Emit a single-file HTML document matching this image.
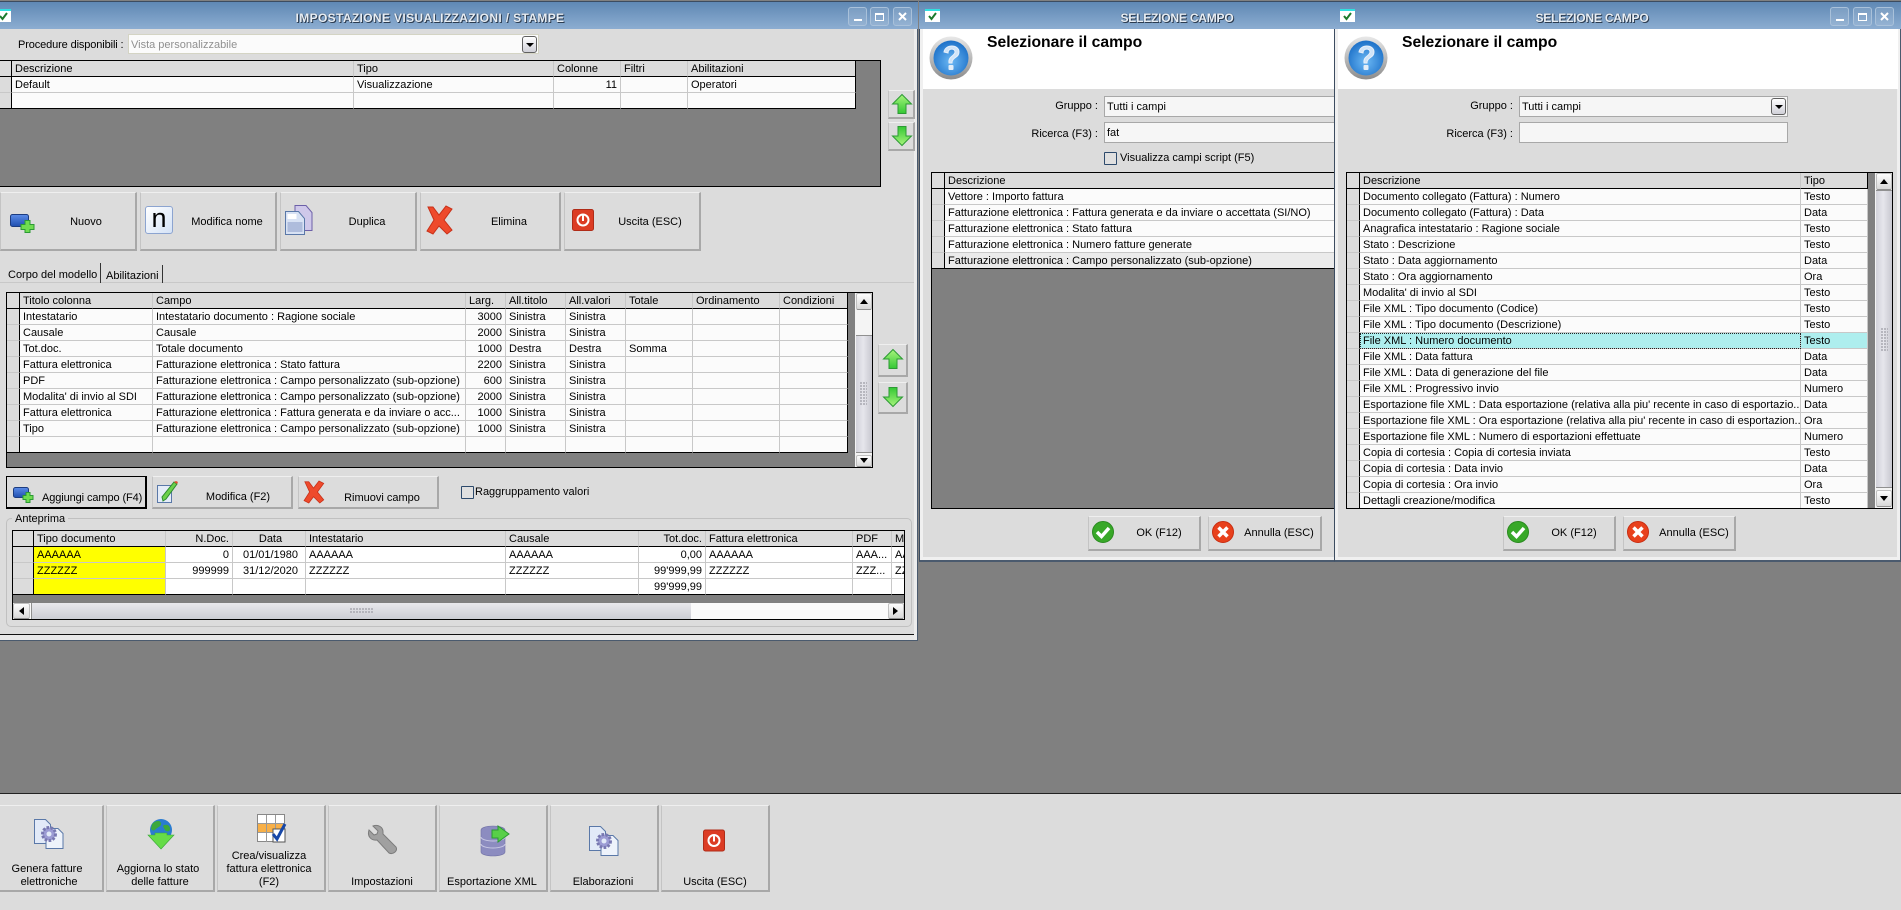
<!DOCTYPE html>
<html><head><meta charset="utf-8"><title>Impostazione</title>
<style>
html,body{margin:0;padding:0;width:1901px;height:910px;overflow:hidden;background:#808080;font-family:"Liberation Sans",sans-serif;font-size:11px;color:#000}
.a{position:absolute;box-sizing:border-box}
.t{position:absolute;white-space:nowrap;font-size:11px;line-height:14px;height:14px}
.c{text-align:center}
.tb{position:absolute;background:linear-gradient(#5f88b4,#8cadd1);border-top:1px solid #3c4c60;box-sizing:border-box}
.tt{position:absolute;font-weight:bold;font-size:12px;color:#e8eef4;text-shadow:1px 1px 0 #2c3c50,0 0 1px #2c3c50;text-align:center;white-space:nowrap;line-height:14px}
.wb{position:absolute;box-sizing:border-box;width:19px;height:19px;top:7px;border:1px solid #a9c1da;border-radius:3px;background:rgba(255,255,255,.12)}
.btn{position:absolute;box-sizing:border-box;background:#dcdcdc;border-style:solid;border-width:1px 2px 2px 1px;border-color:#efefef #a8a8a8 #a8a8a8 #c4c4c4}
.g{position:absolute;box-sizing:border-box;background:#808080;border:1px solid #000;overflow:hidden}
.g table{border-collapse:separate;border-spacing:0;table-layout:fixed;font-size:11px}
.g td{height:16px;box-sizing:border-box;border-right:1px solid #c8c8c8;border-bottom:1px solid #c8c8c8;background:#fbfbfb;padding:2px 0 0 3px;white-space:nowrap;overflow:hidden;line-height:13px}
.g tr.h td{background:#dcdcdc;border-bottom:1px solid #000}
.g td.i{background:#dcdcdc;border-right:1px solid #000;padding:0}
.g td.r{text-align:right;padding:2px 3px 0 0}
.inp{position:absolute;box-sizing:border-box;background:#f6f6f6;border:1px solid #a8a8a8}
.cb{position:absolute;box-sizing:border-box;width:15px;height:17px;background:linear-gradient(#fff,#d0d0d8);border:1px solid #606060;border-radius:3px}
.cb:after{content:"";position:absolute;left:3px;top:6px;border-left:4px solid transparent;border-right:4px solid transparent;border-top:4px solid #000}
.chk{position:absolute;box-sizing:border-box;width:13px;height:13px;background:#e0e0e0;border:1px solid #2d4a6c;border-radius:1px}
.sbb{position:absolute;box-sizing:border-box;background:linear-gradient(#fdfdfd,#d8d8d8);border:1px solid #c0c0c0;border-bottom:1px solid #909090;border-radius:2px}
.sb{position:absolute;box-sizing:border-box;background:linear-gradient(90deg,#d2d2da,#e6e6ec 45%,#c8c8d0);border-top:1px solid #909090;border-bottom:1px solid #909090}
.sbh{position:absolute;box-sizing:border-box;background:linear-gradient(#e8e8ec,#cccdd4)}
.grip{position:absolute;background-image:radial-gradient(circle at 1px 1px,#a8a8b0 1px,transparent 1px);background-size:3px 3px}
svg{position:absolute;overflow:visible}
</style></head><body>

<!-- MAIN WINDOW -->
<div class="a" style="left:0;top:29px;width:918px;height:612px;background:#dcdcdc;border-right:1px solid #4a5a6e;border-bottom:1px solid #4a5a6e"></div>
<div class="a" style="left:0;top:635px;width:917px;height:5px;background:#e8e8e8"></div>
<div class="a" style="left:0;top:634px;width:914px;height:1px;background:#111"></div>
<div class="a" style="left:914px;top:29px;width:3px;height:611px;background:#ececec"></div>
<div class="tb" style="left:0;top:1px;width:918px;height:28px"></div>
<svg style="left:-4px;top:9px" width="15" height="13" viewBox="0 0 15 13"><rect width="15" height="13" fill="#fff"/><rect width="15" height="2" fill="#30e0e0"/><path d="M4 7l2.500 3L11 4" fill="none" stroke="#1c7a2c" stroke-width="2"/></svg>
<div class="tt" style="left:280px;width:300px;top:11px;letter-spacing:.36px">IMPOSTAZIONE VISUALIZZAZIONI / STAMPE</div>
<div class="wb" style="left:848px"><div class="a" style="left:5px;top:11px;width:8px;height:2px;background:#fff"></div></div>
<div class="wb" style="left:870px"><div class="a" style="left:4px;top:5px;width:9px;height:8px;border:1px solid #fff;border-top-width:2px"></div></div>
<div class="wb" style="left:893px"><svg style="left:4px;top:4px" width="9" height="9"><path d="M1 1l7 7M8 1l-7 7" stroke="#fff" stroke-width="2"/></svg></div>

<div class="t" style="left:18px;top:38px;letter-spacing:-.12px">Procedure disponibili :</div>
<div class="inp" style="left:128px;top:34px;width:411px;height:20px;background:#fbfbfb;border-color:#d4d4c4"></div>
<div class="t" style="left:131px;top:38px;color:#909090">Vista personalizzabile</div>
<div class="cb" style="left:522px;top:36px"></div>

<div class="g" style="left:-1px;top:60px;width:882px;height:127px">
<table style="width:856px"><colgroup><col style="width:12px"><col style="width:342px"><col style="width:200px"><col style="width:67px"><col style="width:67px"><col style="width:168px"></colgroup>
<tr class="h"><td class="i"></td><td>Descrizione</td><td>Tipo</td><td>Colonne</td><td>Filtri</td><td style="border-right:1px solid #000">Abilitazioni</td></tr>
<tr><td class="i"></td><td>Default</td><td>Visualizzazione</td><td class="r">11</td><td></td><td style="border-right:1px solid #000">Operatori</td></tr>
<tr><td class="i" style="border-bottom:1px solid #000"></td><td style="border-bottom:1px solid #000"></td><td style="border-bottom:1px solid #000"></td><td style="border-bottom:1px solid #000"></td><td style="border-bottom:1px solid #000"></td><td style="border-right:1px solid #000;border-bottom:1px solid #000"></td></tr>
</table></div>

<svg width="0" height="0" style="left:0;top:0"><defs>
<linearGradient id="gu" x1="0" y1="0" x2="0" y2="1"><stop offset="0" stop-color="#a8f47c"/><stop offset="1" stop-color="#34c834"/></linearGradient>
<linearGradient id="gd" x1="0" y1="1" x2="0" y2="0"><stop offset="0" stop-color="#a8f47c"/><stop offset="1" stop-color="#34c834"/></linearGradient>
<linearGradient id="bl" x1="0" y1="0" x2="0" y2="1"><stop offset="0" stop-color="#5c8ce8"/><stop offset="1" stop-color="#1f4fb0"/></linearGradient>
<linearGradient id="q1" x1="0" y1="0" x2="0" y2="1"><stop offset="0" stop-color="#e8e8e8"/><stop offset="1" stop-color="#8c8c8c"/></linearGradient>
<radialGradient id="q2" cx=".5" cy=".6" r=".6"><stop offset="0" stop-color="#6cb8f4"/><stop offset="1" stop-color="#1c70c8"/></radialGradient>
</defs></svg>

<div class="btn" style="left:888px;top:90px;width:27px;height:29px"></div>
<svg style="left:892px;top:94px" width="20" height="20" viewBox="0 0 20 20"><path d="M10 .5L19.500 10H14v9.500H6V10H.5z" fill="url(#gu)" stroke="#2c9a34"/></svg>
<div class="btn" style="left:888px;top:122px;width:27px;height:29px"></div>
<svg style="left:892px;top:126px" width="20" height="20" viewBox="0 0 20 20"><path d="M10 19.500L19.500 10H14V.5H6V10H.5z" fill="url(#gd)" stroke="#2c9a34"/></svg>

<div class="btn" style="left:0;top:192px;width:137px;height:59px"></div>
<div class="btn" style="left:140px;top:192px;width:137px;height:59px"></div>
<div class="btn" style="left:280px;top:192px;width:137px;height:59px"></div>
<div class="btn" style="left:420px;top:192px;width:141px;height:59px"></div>
<div class="btn" style="left:564px;top:192px;width:137px;height:59px"></div>
<div class="t c" style="left:36px;width:100px;top:215px">Nuovo</div>
<div class="t c" style="left:177px;width:100px;top:215px">Modifica nome</div>
<div class="t c" style="left:317px;width:100px;top:215px">Duplica</div>
<div class="t c" style="left:459px;width:100px;top:215px">Elimina</div>
<div class="t c" style="left:600px;width:100px;top:215px">Uscita (ESC)</div>

<svg style="left:10px;top:214px" width="25" height="19" viewBox="0 0 25 19"><rect x=".5" y=".5" width="18" height="12" rx="2" fill="url(#bl)" stroke="#1c3c80"/><path d="M13.500 4.500h4v4h6v4h-4v... " fill="none"/><path d="M15 6.500h5v4h4v5h-4v3h-5v-3h-4v-5h4z" fill="#6fdc50" stroke="#2b9a34"/></svg>
<div class="a" style="left:145px;top:206px;width:28px;height:28px;background:linear-gradient(135deg,#fff,#d4e2f6);border:1px solid #8ca4d0;border-radius:3px;text-align:center;font-size:27px;line-height:22px">n</div>
<svg style="left:285px;top:205px" width="28" height="30" viewBox="0 0 28 30"><path d="M10 .5h11l6 7v18H10z" fill="#cfc8ea" stroke="#6c60a8"/><path d="M.5 6.500h13l6 7v16H.5z" fill="#d8e2f4" stroke="#5a78a8"/><rect x="2.500" y="17" width="15" height="10" fill="#aebcdc"/><rect x="2.500" y="9" width="9" height="5" fill="#fff"/></svg>
<svg style="left:425px;top:206px" width="28" height="28" viewBox="0 0 28 28"><path d="M3 1l5 0 6 8 7-9 6 3-8 11 8 10-5 4-8-8-6 8-6-3 7-11z" fill="#ee4a2c" stroke="#c83018"/></svg>
<svg style="left:572px;top:209px" width="22" height="22" viewBox="0 0 22 22"><rect x=".5" y=".5" width="21" height="21" rx="2" fill="#dc3c24" stroke="#b02c18"/><circle cx="11" cy="11" r="5.500" fill="none" stroke="#fff" stroke-width="2"/><path d="M11 6v6" stroke="#fff" stroke-width="2"/></svg>

<!-- Tabs -->
<div class="a" style="left:0;top:282px;width:914px;height:1px;background:#c8c8c8"></div>
<div class="a" style="left:100px;top:263px;width:1px;height:20px;background:#333"></div>
<div class="a" style="left:162px;top:265px;width:1px;height:18px;background:#333"></div>
<div class="t" style="left:8px;top:268px">Corpo del modello</div>
<div class="t" style="left:106px;top:269px">Abilitazioni</div>

<!-- Grid 2 -->
<div class="g" style="left:6px;top:292px;width:867px;height:176px">
<table style="width:841px"><colgroup><col style="width:13px"><col style="width:133px"><col style="width:313px"><col style="width:40px"><col style="width:60px"><col style="width:60px"><col style="width:67px"><col style="width:87px"><col style="width:68px"></colgroup>
<tr class="h"><td class="i"></td><td>Titolo colonna</td><td>Campo</td><td>Larg.</td><td>All.titolo</td><td>All.valori</td><td>Totale</td><td>Ordinamento</td><td style="border-right:1px solid #000">Condizioni</td></tr>
<tr><td class="i"></td><td>Intestatario</td><td>Intestatario documento : Ragione sociale</td><td class="r">3000</td><td>Sinistra</td><td>Sinistra</td><td></td><td></td><td style="border-right:1px solid #000"></td></tr>
<tr><td class="i"></td><td>Causale</td><td>Causale</td><td class="r">2000</td><td>Sinistra</td><td>Sinistra</td><td></td><td></td><td style="border-right:1px solid #000"></td></tr>
<tr><td class="i"></td><td>Tot.doc.</td><td>Totale documento</td><td class="r">1000</td><td>Destra</td><td>Destra</td><td>Somma</td><td></td><td style="border-right:1px solid #000"></td></tr>
<tr><td class="i"></td><td>Fattura elettronica</td><td>Fatturazione elettronica : Stato fattura</td><td class="r">2200</td><td>Sinistra</td><td>Sinistra</td><td></td><td></td><td style="border-right:1px solid #000"></td></tr>
<tr><td class="i"></td><td>PDF</td><td>Fatturazione elettronica : Campo personalizzato (sub-opzione)</td><td class="r">600</td><td>Sinistra</td><td>Sinistra</td><td></td><td></td><td style="border-right:1px solid #000"></td></tr>
<tr><td class="i"></td><td>Modalita' di invio al SDI</td><td>Fatturazione elettronica : Campo personalizzato (sub-opzione)</td><td class="r">2000</td><td>Sinistra</td><td>Sinistra</td><td></td><td></td><td style="border-right:1px solid #000"></td></tr>
<tr><td class="i"></td><td>Fattura elettronica</td><td>Fatturazione elettronica : Fattura generata e da inviare o acc...</td><td class="r">1000</td><td>Sinistra</td><td>Sinistra</td><td></td><td></td><td style="border-right:1px solid #000"></td></tr>
<tr><td class="i"></td><td>Tipo</td><td>Fatturazione elettronica : Campo personalizzato (sub-opzione)</td><td class="r">1000</td><td>Sinistra</td><td>Sinistra</td><td></td><td></td><td style="border-right:1px solid #000"></td></tr>
<tr><td class="i" style="border-bottom:1px solid #000"></td><td style="border-bottom:1px solid #000"></td><td style="border-bottom:1px solid #000"></td><td style="border-bottom:1px solid #000"></td><td style="border-bottom:1px solid #000"></td><td style="border-bottom:1px solid #000"></td><td style="border-bottom:1px solid #000"></td><td style="border-bottom:1px solid #000"></td><td style="border-bottom:1px solid #000;border-right:1px solid #000"></td></tr>
</table></div>
<div class="a" style="left:855px;top:293px;width:17px;height:174px;background:#f4f4f4"></div>
<div class="sbb" style="left:856px;top:293px;width:16px;height:17px"></div>
<svg style="left:860px;top:299px" width="8" height="5"><path d="M4 0l4 5H0z"/></svg>
<div class="sb" style="left:856px;top:335px;width:16px;height:118px"></div>
<div class="grip" style="left:860px;top:382px;width:7px;height:24px"></div>
<div class="sbb" style="left:856px;top:455px;width:16px;height:12px"></div>
<svg style="left:860px;top:458px" width="8" height="5"><path d="M4 5l4-5H0z"/></svg>

<div class="btn" style="left:878px;top:344px;width:30px;height:33px"></div>
<svg style="left:883px;top:349px" width="20" height="20" viewBox="0 0 20 20"><path d="M10 .5L19.500 10H14v9.500H6V10H.5z" fill="url(#gu)" stroke="#2c9a34"/></svg>
<div class="btn" style="left:878px;top:382px;width:30px;height:32px"></div>
<svg style="left:883px;top:387px" width="20" height="20" viewBox="0 0 20 20"><path d="M10 19.500L19.500 10H14V.5H6V10H.5z" fill="url(#gd)" stroke="#2c9a34"/></svg>

<!-- Row 2 buttons -->
<div class="btn" style="left:6px;top:476px;width:141px;height:33px;border-color:#000;border-width:1px 2px 2px 1px"></div>
<div class="btn" style="left:152px;top:476px;width:141px;height:33px"></div>
<div class="btn" style="left:298px;top:476px;width:141px;height:33px"></div>
<svg style="left:13px;top:487px" width="21" height="16" viewBox="0 0 21 16"><rect x=".5" y=".5" width="15" height="10" rx="2" fill="url(#bl)" stroke="#1c3c80"/><path d="M13 5.500h4v3h3v4h-3v3h-4v-3h-3v-4h3z" fill="#6fdc50" stroke="#2b9a34"/></svg>
<div class="t" style="left:42px;top:491px;letter-spacing:-.1px">Aggiungi campo (F4)</div>
<svg style="left:157px;top:481px" width="22" height="22" viewBox="0 0 22 22"><path d="M.5 4.500h14v17H.5z" fill="#e4ecf8" stroke="#5a78a8"/><path d="M5 16l1 4 3-2L20 3l-3-2z" fill="#6cd04c" stroke="#2c8a30"/><path d="M17 1l3 2 1-2-2-1z" fill="#e05030"/></svg>
<div class="t c" style="left:188px;width:100px;top:490px">Modifica (F2)</div>
<svg style="left:302px;top:481px" width="23" height="22" viewBox="0 0 28 28"><path d="M3 1l5 0 6 8 7-9 6 3-8 11 8 10-5 4-8-8-6 8-6-3 7-11z" fill="#ee4a2c" stroke="#c83018"/></svg>
<div class="t c" style="left:332px;width:100px;top:491px">Rimuovi campo</div>
<div class="chk" style="left:461px;top:486px"></div>
<div class="t" style="left:475px;top:485px">Raggruppamento valori</div>

<!-- Anteprima -->
<div class="a" style="left:6px;top:518px;width:906px;height:109px;border:1px solid #c0c0c0;border-radius:5px"></div>
<div class="t" style="left:12px;top:512px;background:#dcdcdc;padding:0 3px">Anteprima</div>
<div class="g" style="left:12px;top:530px;width:893px;height:90px">
<table style="width:920px"><colgroup><col style="width:21px"><col style="width:132px"><col style="width:67px"><col style="width:73px"><col style="width:200px"><col style="width:133px"><col style="width:67px"><col style="width:147px"><col style="width:39px"><col style="width:41px"></colgroup>
<tr class="h"><td class="i"></td><td>Tipo documento</td><td class="r">N.Doc.</td><td class="c">Data</td><td>Intestatario</td><td>Causale</td><td class="r">Tot.doc.</td><td>Fattura elettronica</td><td>PDF</td><td>Modalita'</td></tr>
<tr><td class="i"></td><td style="background:#ffff00">AAAAAA</td><td class="r" style="background:#fff">0</td><td class="c" style="background:#fff">01/01/1980</td><td style="background:#fff">AAAAAA</td><td style="background:#fff">AAAAAA</td><td class="r" style="background:#fff">0,00</td><td style="background:#fff">AAAAAA</td><td style="background:#fff">AAA...</td><td style="background:#fff">AA</td></tr>
<tr><td class="i"></td><td style="background:#ffff00">ZZZZZZ</td><td class="r" style="background:#fff">999999</td><td class="c" style="background:#fff">31/12/2020</td><td style="background:#fff">ZZZZZZ</td><td style="background:#fff">ZZZZZZ</td><td class="r" style="background:#fff">99'999,99</td><td style="background:#fff">ZZZZZZ</td><td style="background:#fff">ZZZ...</td><td style="background:#fff">ZZ</td></tr>
<tr><td class="i" style="border-bottom:1px solid #000"></td><td style="background:#ffff00;border-bottom:1px solid #000"></td><td style="background:#fff;border-bottom:1px solid #000"></td><td style="background:#fff;border-bottom:1px solid #000"></td><td style="background:#fff;border-bottom:1px solid #000"></td><td style="background:#fff;border-bottom:1px solid #000"></td><td class="r" style="background:#fff;border-bottom:1px solid #000">99'999,99</td><td style="background:#fff;border-bottom:1px solid #000"></td><td style="background:#fff;border-bottom:1px solid #000"></td><td style="background:#fff;border-bottom:1px solid #000"></td></tr>
</table></div>
<div class="a" style="left:13px;top:603px;width:891px;height:16px;background:#fafafa"></div>
<div class="sbb" style="left:13px;top:603px;width:17px;height:16px"></div>
<svg style="left:19px;top:607px" width="5" height="8"><path d="M0 4l5-4v8z"/></svg>
<div class="sbh" style="left:31px;top:603px;width:660px;height:16px;border-left:1px solid #909090"></div>
<div class="grip" style="left:350px;top:608px;width:24px;height:6px"></div>
<div class="sbb" style="left:888px;top:603px;width:16px;height:16px"></div>
<svg style="left:893px;top:607px" width="5" height="8"><path d="M5 4L0 0v8z"/></svg>

<!-- WINDOW 2 -->
<div class="a" style="left:919px;top:29px;width:416px;height:533px;background:#dcdcdc;border-left:1px solid #3c4c60;border-bottom:2px solid #4a5a6e"></div>
<div class="a" style="left:920px;top:29px;width:3px;height:530px;background:#f0f0f0"></div>
<div class="a" style="left:920px;top:557px;width:415px;height:3px;background:#f0f0f0"></div>
<div class="a" style="left:923px;top:29px;width:412px;height:60px;background:#fff"></div>
<div class="tb" style="left:919px;top:1px;width:416px;height:28px"></div>
<svg style="left:925px;top:9px" width="15" height="13" viewBox="0 0 15 13"><rect width="15" height="13" fill="#fff"/><rect width="15" height="2" fill="#30e0e0"/><path d="M4 7l2.500 3L11 4" fill="none" stroke="#1c7a2c" stroke-width="2"/></svg>
<div class="tt" style="left:1100px;width:154px;top:11px;letter-spacing:-.2px">SELEZIONE CAMPO</div>
<svg style="left:929px;top:36px" width="44" height="44" viewBox="0 0 44 44"><circle cx="22" cy="22" r="21.500" fill="url(#q1)"/><circle cx="22" cy="22" r="17.500" fill="url(#q2)"/><path d="M15 16c1-8 15-8 15 0 0 6-7 5-7 11h-3c-1-7 6-7 6-11 0-4-7-4-7 1z" fill="#d0e4f8" stroke="#e8f0fa"/><rect x="19.500" y="29" width="5" height="5" rx="1" fill="#e4eef8"/></svg>
<div class="a" style="left:987px;top:34px;white-space:nowrap;font-weight:bold;font-size:15.7px;line-height:18px">Selezionare il campo</div>
<div class="t" style="left:1000px;width:98px;text-align:right;top:99px">Gruppo :</div>
<div class="inp" style="left:1104px;top:96px;width:240px;height:21px"></div>
<div class="t" style="left:1107px;top:100px">Tutti i campi</div>
<div class="t" style="left:1000px;width:98px;text-align:right;top:127px">Ricerca (F3) :</div>
<div class="inp" style="left:1104px;top:122px;width:240px;height:21px"></div>
<div class="t" style="left:1107px;top:126px">fat</div>
<div class="chk" style="left:1104px;top:152px"></div>
<div class="t" style="left:1120px;top:151px">Visualizza campi script (F5)</div>
<div class="g" style="left:931px;top:172px;width:420px;height:337px">
<table style="width:420px"><colgroup><col style="width:13px"><col style="width:407px"></colgroup>
<tr class="h"><td class="i"></td><td>Descrizione</td></tr>
<tr><td class="i"></td><td>Vettore : Importo fattura</td></tr>
<tr><td class="i"></td><td>Fatturazione elettronica : Fattura generata e da inviare o accettata (SI/NO)</td></tr>
<tr><td class="i"></td><td>Fatturazione elettronica : Stato fattura</td></tr>
<tr><td class="i"></td><td>Fatturazione elettronica : Numero fatture generate</td></tr>
<tr><td class="i" style="border-bottom:1px solid #000"></td><td style="background:#ebebeb;border-bottom:1px solid #000">Fatturazione elettronica : Campo personalizzato (sub-opzione)</td></tr>
</table></div>
<div class="btn" style="left:1088px;top:516px;width:113px;height:35px"></div>
<div class="btn" style="left:1208px;top:516px;width:114px;height:35px"></div>
<svg style="left:1092px;top:521px" width="22" height="22" viewBox="0 0 22 22"><circle cx="11" cy="11" r="10.500" fill="#38a828" stroke="#2a8a20"/><path d="M5 11l4.500 4.500L17 7" fill="none" stroke="#fff" stroke-width="3.500"/></svg>
<svg style="left:1212px;top:521px" width="22" height="22" viewBox="0 0 22 22"><circle cx="11" cy="11" r="10.500" fill="#e8401c" stroke="#c82c10"/><path d="M6.500 6.500l9 9M15.500 6.500l-9 9" stroke="#fff" stroke-width="3.500"/></svg>
<div class="t c" style="left:1119px;width:80px;top:526px">OK (F12)</div>
<div class="t c" style="left:1239px;width:80px;top:526px">Annulla (ESC)</div>

<!-- WINDOW 3 -->
<div class="a" style="left:1334px;top:29px;width:567px;height:533px;background:#dcdcdc;border-left:1px solid #3c4c60;border-right:1px solid #4a5a6e;border-bottom:2px solid #4a5a6e"></div>
<div class="a" style="left:1335px;top:29px;width:3px;height:530px;background:#f0f0f0"></div>
<div class="a" style="left:1335px;top:557px;width:565px;height:3px;background:#f0f0f0"></div>
<div class="a" style="left:1897px;top:29px;width:3px;height:530px;background:#f0f0f0"></div>
<div class="a" style="left:1338px;top:29px;width:560px;height:60px;background:#fff"></div>
<div class="tb" style="left:1334px;top:1px;width:567px;height:28px"></div>
<svg style="left:1340px;top:9px" width="15" height="13" viewBox="0 0 15 13"><rect width="15" height="13" fill="#fff"/><rect width="15" height="2" fill="#30e0e0"/><path d="M4 7l2.500 3L11 4" fill="none" stroke="#1c7a2c" stroke-width="2"/></svg>
<div class="tt" style="left:1515px;width:154px;top:11px;letter-spacing:-.2px">SELEZIONE CAMPO</div>
<div class="wb" style="left:1830px"><div class="a" style="left:5px;top:11px;width:8px;height:2px;background:#fff"></div></div>
<div class="wb" style="left:1853px"><div class="a" style="left:4px;top:5px;width:9px;height:8px;border:1px solid #fff;border-top-width:2px"></div></div>
<div class="wb" style="left:1875px"><svg style="left:4px;top:4px" width="9" height="9"><path d="M1 1l7 7M8 1l-7 7" stroke="#fff" stroke-width="2"/></svg></div>
<svg style="left:1344px;top:36px" width="44" height="44" viewBox="0 0 44 44"><circle cx="22" cy="22" r="21.500" fill="url(#q1)"/><circle cx="22" cy="22" r="17.500" fill="url(#q2)"/><path d="M15 16c1-8 15-8 15 0 0 6-7 5-7 11h-3c-1-7 6-7 6-11 0-4-7-4-7 1z" fill="#d0e4f8" stroke="#e8f0fa"/><rect x="19.500" y="29" width="5" height="5" rx="1" fill="#e4eef8"/></svg>
<div class="a" style="left:1402px;top:34px;white-space:nowrap;font-weight:bold;font-size:15.7px;line-height:18px">Selezionare il campo</div>
<div class="t" style="left:1413px;width:100px;text-align:right;top:99px">Gruppo :</div>
<div class="inp" style="left:1519px;top:96px;width:269px;height:21px"></div>
<div class="t" style="left:1522px;top:100px">Tutti i campi</div>
<div class="cb" style="left:1771px;top:98px"></div>
<div class="t" style="left:1413px;width:100px;text-align:right;top:127px">Ricerca (F3) :</div>
<div class="inp" style="left:1519px;top:122px;width:269px;height:21px"></div>
<div class="g" style="left:1346px;top:172px;width:547px;height:337px">
<table style="width:521px"><colgroup><col style="width:13px"><col style="width:441px"><col style="width:67px"></colgroup>
<tr class="h"><td class="i"></td><td>Descrizione</td><td style="border-right:1px solid #000">Tipo</td></tr>
<tr><td class="i"></td><td>Documento collegato (Fattura) : Numero</td><td>Testo</td></tr>
<tr><td class="i"></td><td>Documento collegato (Fattura) : Data</td><td>Data</td></tr>
<tr><td class="i"></td><td>Anagrafica intestatario : Ragione sociale</td><td>Testo</td></tr>
<tr><td class="i"></td><td>Stato : Descrizione</td><td>Testo</td></tr>
<tr><td class="i"></td><td>Stato : Data aggiornamento</td><td>Data</td></tr>
<tr><td class="i"></td><td>Stato : Ora aggiornamento</td><td>Ora</td></tr>
<tr><td class="i"></td><td>Modalita' di invio al SDI</td><td>Testo</td></tr>
<tr><td class="i"></td><td>File XML : Tipo documento (Codice)</td><td>Testo</td></tr>
<tr><td class="i"></td><td>File XML : Tipo documento (Descrizione)</td><td>Testo</td></tr>
<tr><td class="i"></td><td style="background:#aeeeee;outline:1px dotted #222;outline-offset:-1px">File XML : Numero documento</td><td style="background:#aeeeee">Testo</td></tr>
<tr><td class="i"></td><td>File XML : Data fattura</td><td>Data</td></tr>
<tr><td class="i"></td><td>File XML : Data di generazione del file</td><td>Data</td></tr>
<tr><td class="i"></td><td>File XML : Progressivo invio</td><td>Numero</td></tr>
<tr><td class="i"></td><td>Esportazione file XML : Data esportazione (relativa alla piu' recente in caso di esportazio...</td><td>Data</td></tr>
<tr><td class="i"></td><td>Esportazione file XML : Ora esportazione (relativa alla piu' recente in caso di esportazion...</td><td>Ora</td></tr>
<tr><td class="i"></td><td>Esportazione file XML : Numero di esportazioni effettuate</td><td>Numero</td></tr>
<tr><td class="i"></td><td>Copia di cortesia : Copia di cortesia inviata</td><td>Testo</td></tr>
<tr><td class="i"></td><td>Copia di cortesia : Data invio</td><td>Data</td></tr>
<tr><td class="i"></td><td>Copia di cortesia : Ora invio</td><td>Ora</td></tr>
<tr><td class="i"></td><td>Dettagli creazione/modifica</td><td>Testo</td></tr>
</table></div>
<div class="a" style="left:1875px;top:173px;width:17px;height:335px;background:#f4f4f4"></div>
<div class="sbb" style="left:1876px;top:173px;width:16px;height:17px"></div>
<svg style="left:1880px;top:179px" width="8" height="5"><path d="M4 0l4 5H0z"/></svg>
<div class="sb" style="left:1876px;top:190px;width:16px;height:298px"></div>
<div class="grip" style="left:1881px;top:328px;width:7px;height:24px"></div>
<div class="sbb" style="left:1876px;top:490px;width:16px;height:17px"></div>
<svg style="left:1880px;top:496px" width="8" height="5"><path d="M4 5l4-5H0z"/></svg>
<div class="btn" style="left:1503px;top:516px;width:113px;height:35px"></div>
<div class="btn" style="left:1623px;top:516px;width:113px;height:35px"></div>
<svg style="left:1507px;top:521px" width="22" height="22" viewBox="0 0 22 22"><circle cx="11" cy="11" r="10.500" fill="#38a828" stroke="#2a8a20"/><path d="M5 11l4.500 4.500L17 7" fill="none" stroke="#fff" stroke-width="3.500"/></svg>
<svg style="left:1627px;top:521px" width="22" height="22" viewBox="0 0 22 22"><circle cx="11" cy="11" r="10.500" fill="#e8401c" stroke="#c82c10"/><path d="M6.500 6.500l9 9M15.500 6.500l-9 9" stroke="#fff" stroke-width="3.500"/></svg>
<div class="t c" style="left:1534px;width:80px;top:526px">OK (F12)</div>
<div class="t c" style="left:1654px;width:80px;top:526px">Annulla (ESC)</div>

<!-- BOTTOM TOOLBAR -->
<div class="a" style="left:0;top:793px;width:1901px;height:117px;background:#dcdcdc;border-top:1px solid #222"></div>
<div class="btn" style="left:-2px;top:805px;width:106px;height:87px"></div>
<div class="btn" style="left:106px;top:805px;width:109px;height:87px"></div>
<div class="btn" style="left:217px;top:805px;width:109px;height:87px"></div>
<div class="btn" style="left:328px;top:805px;width:109px;height:87px"></div>
<div class="btn" style="left:439px;top:805px;width:109px;height:87px"></div>
<div class="btn" style="left:550px;top:805px;width:109px;height:87px"></div>
<div class="btn" style="left:661px;top:805px;width:109px;height:87px"></div>
<div class="t c" style="left:-3px;width:100px;top:862px">Genera fatture</div>
<div class="t c" style="left:-1px;width:100px;top:875px">elettroniche</div>
<div class="t c" style="left:108px;width:100px;top:862px">Aggiorna lo stato</div>
<div class="t c" style="left:110px;width:100px;top:875px">delle fatture</div>
<div class="t c" style="left:219px;width:100px;top:849px">Crea/visualizza</div>
<div class="t c" style="left:219px;width:100px;top:862px">fattura elettronica</div>
<div class="t c" style="left:219px;width:100px;top:875px">(F2)</div>
<div class="t c" style="left:332px;width:100px;top:875px">Impostazioni</div>
<div class="t c" style="left:442px;width:100px;top:875px">Esportazione XML</div>
<div class="t c" style="left:553px;width:100px;top:875px">Elaborazioni</div>
<div class="t c" style="left:665px;width:100px;top:875px">Uscita (ESC)</div>

<svg style="left:34px;top:819px" width="30" height="30" viewBox="0 0 30 30"><path d="M.5.500h11l5 5v19H.5z" fill="#e2eaf8" stroke="#5a78a8"/><path d="M12 9.500h12l5 5v15H12z" fill="#eef3fb" stroke="#5a78a8"/><circle cx="15" cy="15" r="6.500" fill="#9c9cd4" stroke="#7878b0" stroke-width="3" stroke-dasharray="2.500 1.500"/><circle cx="15" cy="15" r="2.500" fill="#e2eaf8"/></svg>
<svg style="left:147px;top:819px" width="28" height="30" viewBox="0 0 28 30"><circle cx="14" cy="11" r="11" fill="#2a7cd0"/><path d="M5 5c4-4 8-4 9-1s-3 4-5 6-3 2-5 0zM17 6c4-1 6 1 6 4s-4 3-5 1-3-4-1-5z" fill="#3ca83c"/><path d="M14 30L1 16h7V14h12v2h7z" fill="#66dc48" stroke="#38a838" stroke-width=".6"/></svg>
<svg style="left:257px;top:814px" width="30" height="30" viewBox="0 0 30 30"><rect x=".5" y=".5" width="27" height="27" fill="#fff" stroke="#888"/><rect x="1" y="9.500" width="26" height="9" fill="#f8b048"/><path d="M9.500 1v27M18.500 1v27M1 9.500h27M1 18.500h27" stroke="#999"/><rect x="16" y="15" width="12" height="13" fill="#fff" stroke="#555"/><path d="M16 20l4 5 8-15" fill="none" stroke="#1848a8" stroke-width="3"/></svg>
<svg style="left:367px;top:825px" width="31" height="32" viewBox="0 0 31 32"><path d="M2 5l5 5 3-1 1-3-5-5c5-2 10 1 10 6l0 2 13 13c2 4-3 8-7 6L10 15c-6 1-10-4-8-10z" fill="#a0a0a0" stroke="#7c7c7c"/></svg>
<svg style="left:481px;top:826px" width="28" height="30" viewBox="0 0 28 30"><path d="M0 4a12 4 0 0 1 24 0v22a12 4 0 0 1-24 0z" fill="#8c8cc0" stroke="#7070a4" stroke-width=".6"/><path d="M0 11a12 4 0 0 0 24 0M0 18a12 4 0 0 0 24 0" fill="none" stroke="#c8c8e4"/><path d="M11 4h6V0l11 8-11 8v-4h-6z" fill="#58d048" stroke="#2c9a34"/></svg>
<svg style="left:589px;top:826px" width="30" height="30" viewBox="0 0 30 30"><path d="M.5.500h11l5 5v19H.5z" fill="#e2eaf8" stroke="#5a78a8"/><path d="M12 9.500h12l5 5v15H12z" fill="#eef3fb" stroke="#5a78a8"/><circle cx="15" cy="15" r="6.500" fill="#9c9cd4" stroke="#7878b0" stroke-width="3" stroke-dasharray="2.500 1.500"/><circle cx="15" cy="15" r="2.500" fill="#e2eaf8"/></svg>
<svg style="left:703px;top:829px" width="22" height="23" viewBox="0 0 22 22"><rect x=".5" y=".5" width="21" height="21" rx="2" fill="#dc3c24" stroke="#b02c18"/><circle cx="11" cy="11" r="5.500" fill="none" stroke="#fff" stroke-width="2"/><path d="M11 6v6" stroke="#fff" stroke-width="2"/></svg>
</body></html>
